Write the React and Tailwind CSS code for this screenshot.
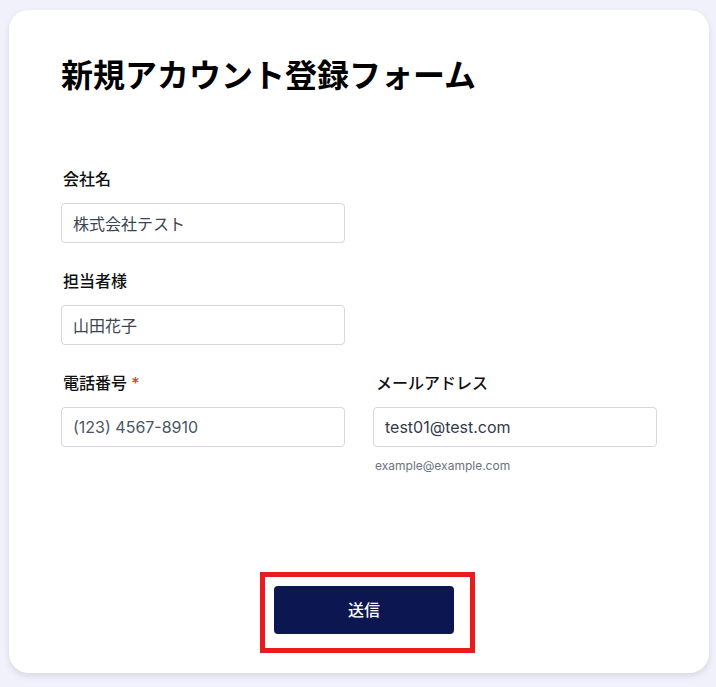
export default function App() {
  const font = { fontFamily: "Inter, 'Noto Sans CJK JP', sans-serif" };
  return (
    <div className="min-h-[687px] w-[716px] bg-[#f1f1fb] pt-[10px] pl-[9px]" style={font}>
      <div className="w-[700px] h-[663px] bg-white rounded-[20px] shadow-[0_3px_6px_rgba(40,40,90,0.12)] pt-[46px] px-[52px] flex flex-col">
        <h1 className="text-[32px] leading-[40px] font-bold text-black">新規アカウント登録フォーム</h1>
        <div className="mt-[71px] grid grid-cols-2 gap-x-[28px]">
          <div className="flex flex-col">
            <label className="text-[16px] leading-[24px] font-medium text-[#111] pl-[2px]">会社名</label>
            <input className="mt-[12px] h-[40px] border border-[#d4d7e2] rounded-[4px] px-[11px] text-[16px] text-[#3b4452] outline-none" defaultValue="株式会社テスト" />
          </div>
          <div />
          <div className="flex flex-col mt-[26px]">
            <label className="text-[16px] leading-[24px] font-medium text-[#111] pl-[2px]">担当者様</label>
            <input className="mt-[12px] h-[40px] border border-[#d4d7e2] rounded-[4px] px-[11px] text-[16px] text-[#3b4452] outline-none" defaultValue="山田花子" />
          </div>
          <div />
          <div className="flex flex-col mt-[26px]">
            <label className="text-[16px] leading-[24px] font-medium text-[#111] pl-[2px]">
              電話番号 <span className="text-[#e5392e]">*</span>
            </label>
            <input className="mt-[12px] h-[40px] border border-[#d4d7e2] rounded-[4px] px-[11px] text-[16px] text-[#4b5563] outline-none" defaultValue="(123) 4567-8910" />
          </div>
          <div className="flex flex-col mt-[26px]">
            <label className="text-[16px] leading-[24px] font-medium text-[#111] pl-[3px]">メールアドレス</label>
            <input className="mt-[12px] h-[40px] border border-[#d4d7e2] rounded-[4px] px-[11px] text-[16px] text-[#333b48] outline-none" defaultValue="test01@test.com" />
            <p className="mt-[11px] text-[12px] leading-[16px] text-[#6b7280] pl-[2px]">example@example.com</p>
          </div>
        </div>
        <div className="mt-auto mb-[20px] flex justify-center pl-[17px]">
          <div className="border-[5px] border-[#e81c1f] pt-[9px] pl-[9px] pr-[16px] pb-[14px]">
            <button className="w-[180px] h-[48px] bg-[#0c1650] rounded-[4px] text-white text-[16px] font-medium">送信</button>
          </div>
        </div>
      </div>
    </div>
  );
}
